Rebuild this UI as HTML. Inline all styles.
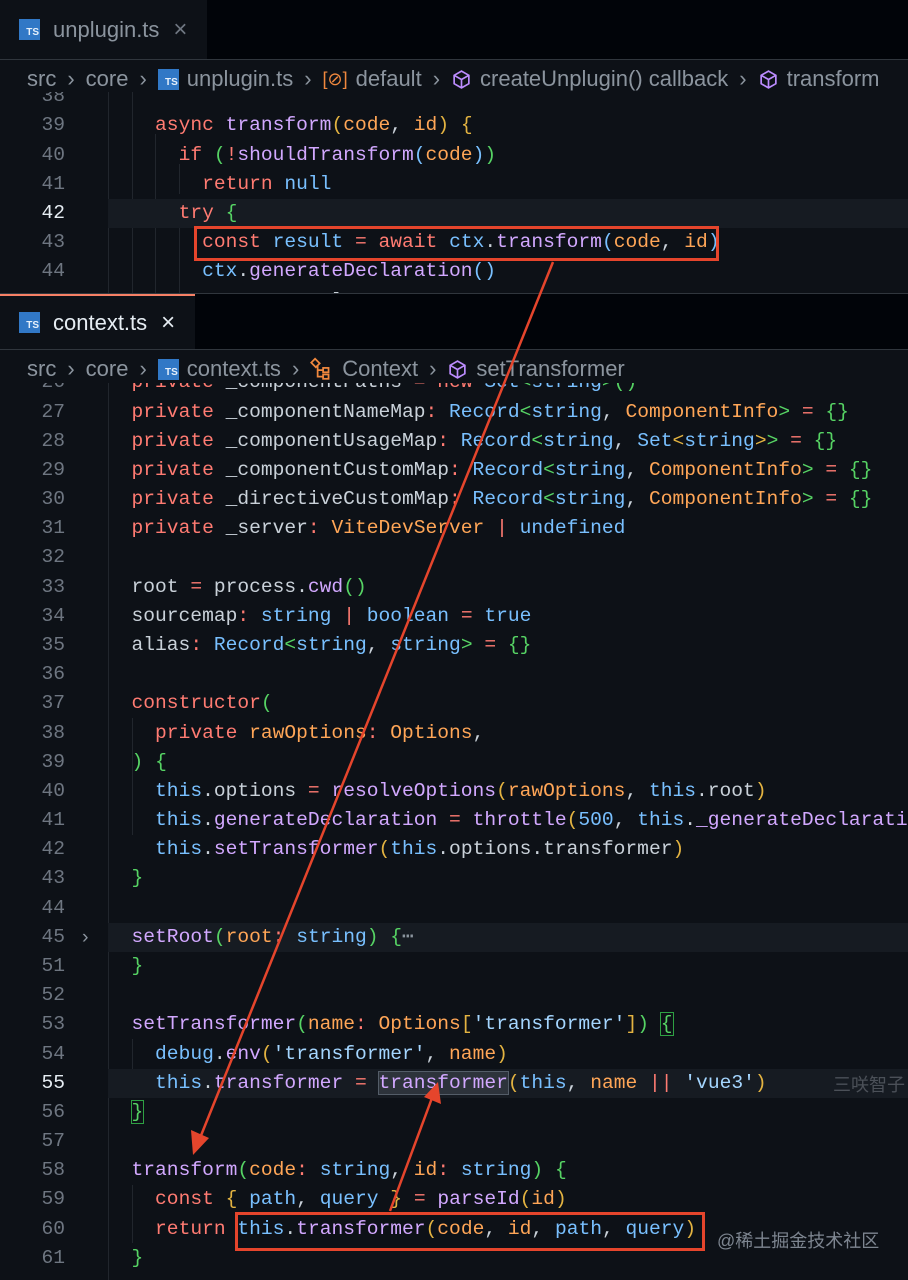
<!DOCTYPE html>
<html><head><meta charset="utf-8"><style>
*{margin:0;padding:0;box-sizing:border-box}
body{width:908px;height:1280px;background:#0d1117;overflow:hidden;position:relative;font-family:"Liberation Sans",sans-serif}
.bar{position:absolute;left:0;width:908px;background:#010409;border-bottom:1px solid #30363d}
.tab{position:absolute;left:0;top:0;height:100%;background:#0d1117;display:flex;align-items:center;padding-left:19px;font-size:22px}
.ts{display:inline-block;width:21px;height:21px;background:#3178c6;color:#e6f0fb;font:bold 10px "Liberation Sans",sans-serif;text-align:right;padding:8px 1px 0 0;line-height:12px;vertical-align:middle}
.crumb{position:absolute;left:27px;font-size:22px;color:#8b949e;white-space:nowrap;display:flex;align-items:center;gap:8px}
.sep{color:#8b949e;margin:0 3px;font-size:22px}
.panel{position:absolute;left:0;width:908px;overflow:hidden}
.ln{position:absolute;left:0;width:908px;height:29.18px;line-height:29.18px;font-family:"Liberation Mono",monospace;font-size:19.6px;white-space:pre;color:#c9d1d9}
.num{position:absolute;right:843px;color:#6e7681;text-align:right}
.num.cur{color:#e6edf3}
.code{position:absolute;left:108px}
.hl{background:#161b22}
.k{color:#ff7b72}.f{color:#d2a8ff}.o{color:#ffa657}.b{color:#79c0ff}.s{color:#a5d6ff}.g{color:#56d364}.y{color:#e3b341}
.guide{position:absolute;width:1px;background:#21262d}
.box{position:absolute;border:3px solid #e5452c}
</style></head><body>

<div class="bar" style="top:0;height:60px"><div class="tab" style="width:207px;color:#8b949e"><span class="ts">TS</span><span style="margin-left:13px">unplugin.ts</span><span style="margin-left:14px;font-size:24px;color:#6e7681">×</span></div></div>
<div class="crumb" style="top:64px;height:30px">src<span class="sep">›</span>core<span class="sep">›</span><span class="ts">TS</span>unplugin.ts<span class="sep">›</span><span style="color:#f0883e;font-size:18px">[⊘]</span>default<span class="sep">›</span><svg width="21" height="21" viewBox="0 0 20 20"><path d="M10 2 L17 6 V14 L10 18 L3 14 V6 Z M3 6 L10 10 L17 6 M10 10 V18" fill="none" stroke="#bc8cff" stroke-width="1.6"/></svg>createUnplugin() callback<span class="sep">›</span><svg width="21" height="21" viewBox="0 0 20 20"><path d="M10 2 L17 6 V14 L10 18 L3 14 V6 Z M3 6 L10 10 L17 6 M10 10 V18" fill="none" stroke="#bc8cff" stroke-width="1.6"/></svg>transform</div>
<div class="panel" style="top:92px;height:201px">
<div class="guide" style="left:108px;top:0;height:201px"></div>
<div class="guide" style="left:132px;top:0;height:201px"></div>
<div class="guide" style="left:155px;top:42px;height:160px"></div>
<div class="guide" style="left:179px;top:72px;height:30px"></div>
<div class="guide" style="left:179px;top:130px;height:80px"></div>
<div class="ln" style="top:-9.6px"><span class="num">38</span></div>
<div class="ln" style="top:19.4px"><span class="num">39</span><span class="code">    <span class="k">async</span> <span class="f">transform</span><span class="y">(</span><span class="o">code</span>, <span class="o">id</span><span class="y">)</span> <span class="y">{</span></span></div>
<div class="ln" style="top:48.6px"><span class="num">40</span><span class="code">      <span class="k">if</span> <span class="g">(</span><span class="k">!</span><span class="f">shouldTransform</span><span class="b">(</span><span class="o">code</span><span class="b">)</span><span class="g">)</span></span></div>
<div class="ln" style="top:77.8px"><span class="num">41</span><span class="code">        <span class="k">return</span> <span class="b">null</span></span></div>
<div class="ln" style="top:107px"><div class="hl" style="position:absolute;left:108px;right:0;top:0;bottom:0"></div><span class="num cur">42</span><span class="code">      <span class="k">try</span> <span class="g">{</span></span></div>
<div class="ln" style="top:136.1px"><span class="num">43</span><span class="code">        <span class="k">const</span> <span class="b">result</span> <span class="k">=</span> <span class="k">await</span> <span class="b">ctx</span>.<span class="f">transform</span><span class="b">(</span><span class="o">code</span>, <span class="o">id</span><span class="b">)</span></span></div>
<div class="ln" style="top:165.3px"><span class="num">44</span><span class="code">        <span class="b">ctx</span>.<span class="f">generateDeclaration</span><span class="b">()</span></span></div>
<div class="ln" style="top:194.5px"><span class="num">45</span><span class="code">        <span class="k">return</span> result</span></div>
</div>

<div class="bar" style="top:293px;height:57px;border-top:1px solid #30363d"><div class="tab" style="width:195px;color:#e6edf3;border-top:2px solid #f78166"><span class="ts">TS</span><span style="margin-left:13px">context.ts</span><span style="margin-left:14px;font-size:24px;color:#e6edf3">×</span></div></div>
<div class="crumb" style="top:354px;height:30px">src<span class="sep">›</span>core<span class="sep">›</span><span class="ts">TS</span>context.ts<span class="sep">›</span><svg width="24" height="24" viewBox="0 0 22 22"><g fill="none" stroke="#f0883e" stroke-width="1.6"><rect x="2" y="3" width="6" height="5" transform="rotate(45 5 5.5)"/><rect x="12" y="10" width="5" height="4"/><rect x="12" y="16" width="5" height="4"/><path d="M7 8 V18 H12 M7 12 H12"/></g></svg>Context<span class="sep">›</span><svg width="21" height="21" viewBox="0 0 20 20"><path d="M10 2 L17 6 V14 L10 18 L3 14 V6 Z M3 6 L10 10 L17 6 M10 10 V18" fill="none" stroke="#bc8cff" stroke-width="1.6"/></svg>setTransformer</div>
<div class="panel" style="top:383px;height:897px">
<div class="guide" style="left:108px;top:0;height:897px"></div>
<div class="guide" style="left:132px;top:335px;height:117px"></div>
<div class="guide" style="left:132px;top:656px;height:58px"></div>
<div class="guide" style="left:132px;top:802px;height:58px"></div>
<script>
const L=[
[26,'  <span class="k">private</span> _componentPaths <span class="k">=</span> <span class="k">new</span> <span class="b">Set</span><span class="g">&lt;</span><span class="b">string</span><span class="g">&gt;()</span>'],
[27,'  <span class="k">private</span> _componentNameMap<span class="k">:</span> <span class="b">Record</span><span class="g">&lt;</span><span class="b">string</span>, <span class="o">ComponentInfo</span><span class="g">&gt;</span> <span class="k">=</span> <span class="g">{}</span>'],
[28,'  <span class="k">private</span> _componentUsageMap<span class="k">:</span> <span class="b">Record</span><span class="g">&lt;</span><span class="b">string</span>, <span class="b">Set</span><span class="y">&lt;</span><span class="b">string</span><span class="y">&gt;</span><span class="g">&gt;</span> <span class="k">=</span> <span class="g">{}</span>'],
[29,'  <span class="k">private</span> _componentCustomMap<span class="k">:</span> <span class="b">Record</span><span class="g">&lt;</span><span class="b">string</span>, <span class="o">ComponentInfo</span><span class="g">&gt;</span> <span class="k">=</span> <span class="g">{}</span>'],
[30,'  <span class="k">private</span> _directiveCustomMap<span class="k">:</span> <span class="b">Record</span><span class="g">&lt;</span><span class="b">string</span>, <span class="o">ComponentInfo</span><span class="g">&gt;</span> <span class="k">=</span> <span class="g">{}</span>'],
[31,'  <span class="k">private</span> _server<span class="k">:</span> <span class="o">ViteDevServer</span> <span class="k">|</span> <span class="b">undefined</span>'],
[32,''],
[33,'  root <span class="k">=</span> process.<span class="f">cwd</span><span class="g">()</span>'],
[34,'  sourcemap<span class="k">:</span> <span class="b">string</span> <span class="k">|</span> <span class="b">boolean</span> <span class="k">=</span> <span class="b">true</span>'],
[35,'  alias<span class="k">:</span> <span class="b">Record</span><span class="g">&lt;</span><span class="b">string</span>, <span class="b">string</span><span class="g">&gt;</span> <span class="k">=</span> <span class="g">{}</span>'],
[36,''],
[37,'  <span class="k">constructor</span><span class="g">(</span>'],
[38,'    <span class="k">private</span> <span class="o">rawOptions</span><span class="k">:</span> <span class="o">Options</span>,'],
[39,'  <span class="g">)</span> <span class="g">{</span>'],
[40,'    <span class="b">this</span>.options <span class="k">=</span> <span class="f">resolveOptions</span><span class="y">(</span><span class="o">rawOptions</span>, <span class="b">this</span>.root<span class="y">)</span>'],
[41,'    <span class="b">this</span>.<span class="f">generateDeclaration</span> <span class="k">=</span> <span class="f">throttle</span><span class="y">(</span><span class="b">500</span>, <span class="b">this</span>.<span class="f">_generateDeclaration</span>'],
[42,'    <span class="b">this</span>.<span class="f">setTransformer</span><span class="y">(</span><span class="b">this</span>.options.transformer<span class="y">)</span>'],
[43,'  <span class="g">}</span>'],
[44,''],
[45,'  <span class="f">setRoot</span><span class="g">(</span><span class="o">root</span><span class="k">:</span> <span class="b">string</span><span class="g">)</span> <span class="g">{</span><span style="color:#8b949e">⋯</span>'],
[51,'  <span class="g">}</span>'],
[52,''],
[53,'  <span class="f">setTransformer</span><span class="g">(</span><span class="o">name</span><span class="k">:</span> <span class="o">Options</span><span class="y">[</span><span class="s">\'transformer\'</span><span class="y">]</span><span class="g">)</span> <span class="g" style="outline:1px solid #2ea043">{</span>'],
[54,'    <span class="b">debug</span>.<span class="f">env</span><span class="y">(</span><span class="s">\'transformer\'</span>, <span class="o">name</span><span class="y">)</span>'],
[55,'    <span class="b">this</span>.<span class="f">transformer</span> <span class="k">=</span> <span class="f" style="background:#2d333b;outline:1px solid #545d68">transformer</span><span class="y">(</span><span class="b">this</span>, <span class="o">name</span> <span class="k">||</span> <span class="s">\'vue3\'</span><span class="y">)</span>'],
[56,'  <span class="g" style="outline:1px solid #2ea043">}</span>'],
[57,''],
[58,'  <span class="f">transform</span><span class="g">(</span><span class="o">code</span><span class="k">:</span> <span class="b">string</span>, <span class="o">id</span><span class="k">:</span> <span class="b">string</span><span class="g">)</span> <span class="g">{</span>'],
[59,'    <span class="k">const</span> <span class="y">{</span> <span class="b">path</span>, <span class="b">query</span> <span class="y">}</span> <span class="k">=</span> <span class="f">parseId</span><span class="y">(</span><span class="o">id</span><span class="y">)</span>'],
[60,'    <span class="k">return</span> <span class="b">this</span>.<span class="f">transformer</span><span class="y">(</span><span class="o">code</span>, <span class="o">id</span>, <span class="b">path</span>, <span class="b">query</span><span class="y">)</span>'],
[61,'  <span class="g">}</span>']];
let h='';L.forEach((r,i)=>{const t=-14.6+i*29.18;const cur=r[0]==55;
h+='<div class="ln" style="top:'+t+'px">'+((cur||r[0]==45)?'<div class="hl" style="position:absolute;left:108px;right:0;top:0;bottom:0"></div>':'')+'<span class="num'+(cur?' cur':'')+'">'+r[0]+'</span>'+(r[0]==45?'<span style="position:absolute;left:82px;color:#8b949e;font-family:Liberation Sans">&#x203A;</span>':'')+'<span class="code">'+r[1]+'</span></div>';});
document.write(h);
</script>
</div>
<div style="position:absolute;left:833px;top:1071px;font:18px 'Liberation Sans','Noto Sans CJK SC',sans-serif;color:#4b5058;white-space:nowrap">三咲智子</div>
<div style="position:absolute;left:717px;top:1227px;font:18px 'Liberation Sans','Noto Sans CJK SC',sans-serif;color:#7d8590;white-space:nowrap">@稀土掘金技术社区</div>

<div class="box" style="left:194px;top:226px;width:525px;height:35px"></div>
<div class="box" style="left:235px;top:1212px;width:470px;height:39px"></div>
<svg style="position:absolute;left:0;top:0" width="908" height="1280">
<line x1="553" y1="262" x2="200" y2="1138" stroke="#e5452c" stroke-width="2.5"/>
<polygon points="193,1155 191,1130 209,1138" fill="#e5452c"/>
<line x1="390" y1="1211" x2="432" y2="1098" stroke="#e5452c" stroke-width="2.5"/>
<polygon points="438,1082 441,1104 424,1097" fill="#e5452c"/>
</svg>
</body></html>
